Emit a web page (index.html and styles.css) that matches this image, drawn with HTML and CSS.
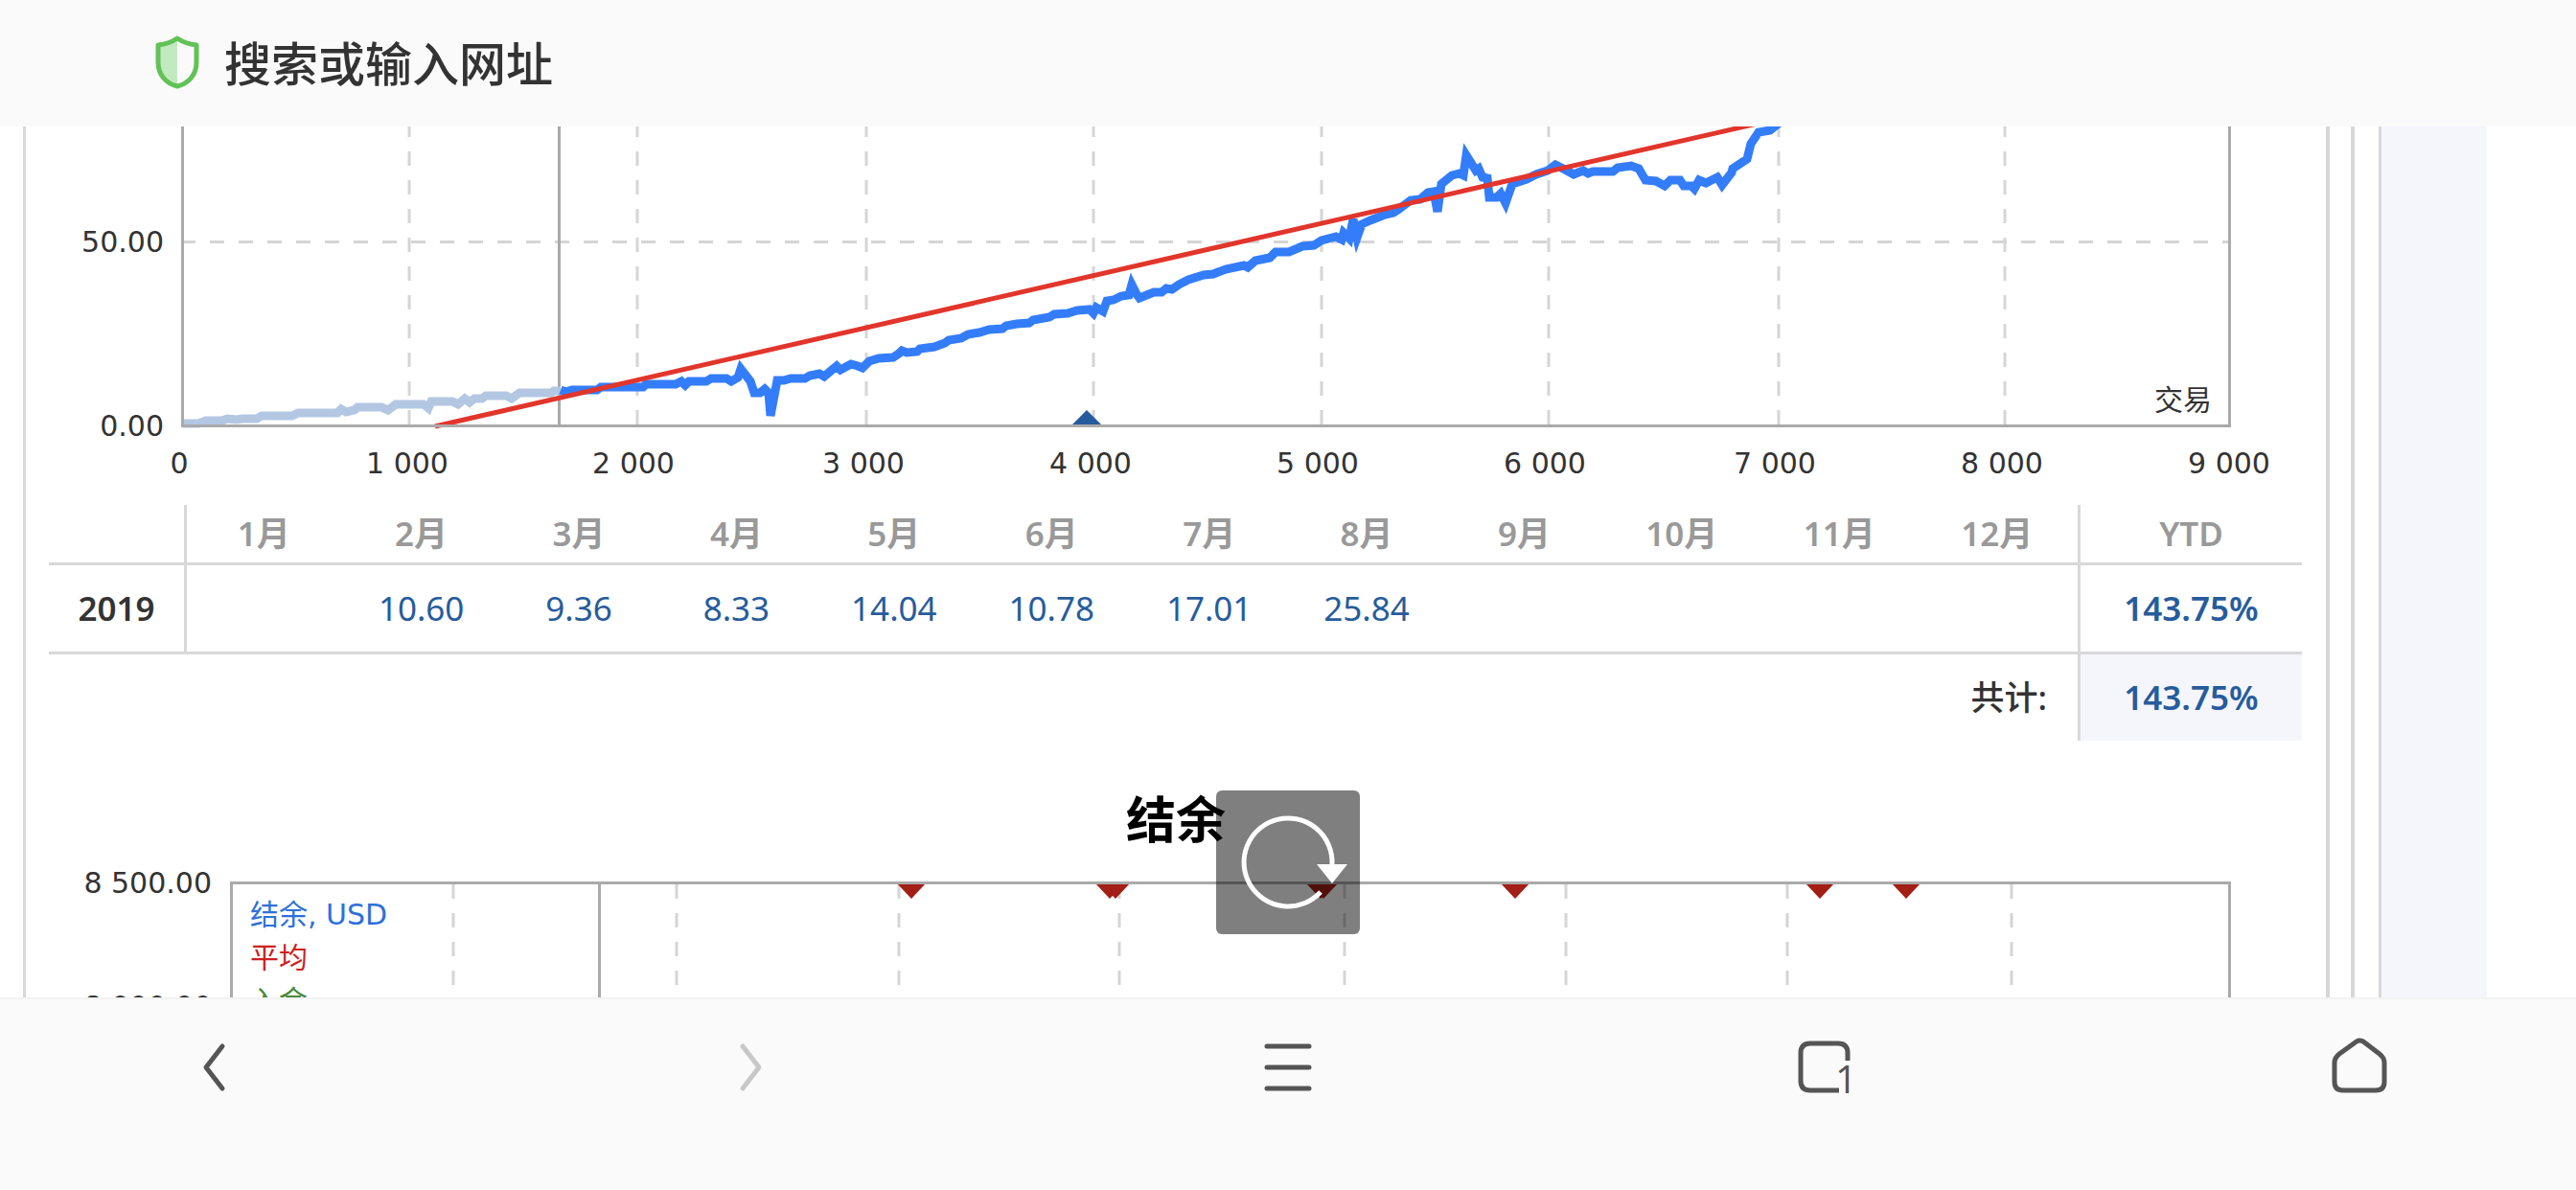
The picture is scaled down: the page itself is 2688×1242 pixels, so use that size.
FILE: index.html
```html
<!DOCTYPE html>
<html lang="zh">
<head>
    <meta charset="UTF-8">
    <title>结余</title>
    <link rel="stylesheet" href="styles.css">
</head>
<body>

<header class="topbar">
    <svg class="shield" width="46" height="56" viewBox="0 0 46 56">
        <path d="M23 5 L5 11 V29 C5 40 13 48 23 52 Z" fill="#c3e9c0"/>
        <path d="M23 3 Q32 9 43 10 V28 C43 41 35 50 23 53 C11 50 3 41 3 28 V10 Q14 9 23 3 Z" fill="none" stroke="#62c258" stroke-width="5" stroke-linejoin="round"/>
    </svg>
    <input class="search" type="text" placeholder="搜索或输入网址" aria-label="搜索或输入网址">
</header>

<main class="page">
    <div class="panel">
        <!-- 增长 -->
        <svg class="chart" viewBox="27 132 2400 395">
            <g class="grid">
                <path d="M427 128V443M665 128V443M904 128V443M1141 128V443M1379 128V443M1616 128V443M1856 128V443M2092 128V443"/>
                <path d="M189 252.500H2326"/>
            </g>
            <path class="axis" d="M583.500 132V443"/>
            <polyline class="line old" points="191,442 207,442 215,439 232,439 237,437 247,438 253,437 268,437 273,434 305,434 311,431 352,431 356,427 361,430 370,428 373,425 398,425 405,428 413,422 442,422 447,426 450,419 472,419 478,422 485,416 490,420 495,416 503,416 507,413 528,413 534,416 542,410 575,410 578,408 585,408"/>
            <polyline class="line" points="585,407 590,409 597,407 623,407 627,404 671,404 674,401 705,401 711,398 715,402 719,398 737,398 742,395 758,395 763,398 770,394 773,385 783,398 787,410 793,410 798,406 802,410 804,434 811,397 818,397 825,395 840,395 845,392 855,390 860,393 867,387 873,382 877,386 888,380 895,382 900,384 907,377 917,374 932,373 938,369 941,366 946,368 957,367 960,364 975,362 986,358 990,355 1003,353 1010,349 1022,347 1032,344 1046,343 1050,340 1061,338 1074,337 1078,334 1095,331 1100,328 1114,327 1124,324 1137,323 1141,327 1144,321 1151,325 1155,314 1162,313 1170,309 1178,308 1181,297 1186,307 1189,311 1204,305 1212,305 1217,301 1223,302 1230,297 1240,292 1256,287 1266,286 1279,281 1298,277 1302,279 1310,272 1325,269 1331,263 1345,263 1359,257 1371,256 1379,251 1394,247 1400,250 1402,243 1408,249 1412,229 1416,248 1421,234 1430,230 1445,224 1454,222 1460,218 1472,209 1482,208 1490,201 1496,200 1500,221 1504,192 1515,183 1523,181 1527,183 1530,162 1540,178 1543,176 1547,185 1552,186 1554,206 1562,206 1566,202 1571,212 1578,192 1593,187 1603,182 1615,178 1623,172 1633,177 1642,182 1652,178 1657,181 1662,179 1683,179 1688,175 1702,173 1710,176 1717,188 1728,189 1737,194 1743,188 1753,188 1757,194 1765,194 1768,197 1773,188 1780,191 1792,185 1797,193 1807,180 1808,176 1823,166 1827,150 1835,138 1847,136 1857,128"/>
            <path class="trend" d="M454 445L1838 128"/>
            <path class="axis" d="M190.500 132V444.500H2326.500V132"/>
            <path class="deposit" d="M1119 443L1134 428L1149 443Z"/>
            <g class="labels end">
                <text x="171" y="263">50.00</text>
                <text x="171" y="455">0.00</text>
                <text x="2308" y="428">交易</text>
            </g>
            <g class="labels mid">
                <text x="187" y="494">0</text>
                <text x="425" y="494">1 000</text>
                <text x="661" y="494">2 000</text>
                <text x="901" y="494">3 000</text>
                <text x="1138" y="494">4 000</text>
                <text x="1375" y="494">5 000</text>
                <text x="1612" y="494">6 000</text>
                <text x="1852" y="494">7 000</text>
                <text x="2089" y="494">8 000</text>
                <text x="2326" y="494">9 000</text>
            </g>
        </svg>

        <table class="months">
            <thead>
                <tr>
                    <th class="year"></th>
                    <th>1月</th><th>2月</th><th>3月</th><th>4月</th><th>5月</th><th>6月</th>
                    <th>7月</th><th>8月</th><th>9月</th><th>10月</th><th>11月</th><th>12月</th>
                    <th class="ytd">YTD</th>
                </tr>
            </thead>
            <tbody>
                <tr>
                    <th class="year">2019</th>
                    <td></td><td>10.60</td><td>9.36</td><td>8.33</td><td>14.04</td><td>10.78</td>
                    <td>17.01</td><td>25.84</td><td></td><td></td><td></td><td></td>
                    <td class="ytd">143.75%</td>
                </tr>
            </tbody>
            <tfoot>
                <tr>
                    <th class="total" colspan="13">共计:</th>
                    <td class="ytd">143.75%</td>
                </tr>
            </tfoot>
        </table>

        <h2 class="title">结余</h2>

        <!-- 结余 -->
        <svg class="chart" viewBox="27 893 2400 260">
            <path class="grid" d="M473 923V1153M706 923V1153M938 923V1153M1168 923V1153M1403 923V1153M1634 923V1153M1865 923V1153M2099 923V1153"/>
            <path class="withdraw" d="M936 922h30l-15 16zM1143 922h30l-15 16zM1149 922h30l-15 16zM1363 922h30l-15 16zM1366 922h30l-15 16zM1566 922h30l-15 16zM1884 922h30l-15 16zM1974 922h30l-15 16z"/>
            <path class="axis" d="M625.500 922V1153M241.500 1153V921.500H2326.500V1153"/>
            <g class="labels end">
                <text x="221" y="932">8 500.00</text>
                <text x="221" y="1061">8 000.00</text>
            </g>
            <g class="labels">
                <text class="blue" x="261" y="965">结余, USD</text>
                <text class="red" x="261" y="1010">平均</text>
                <text class="green" x="261" y="1055">入金</text>
            </g>
        </svg>
    </div>
    <div class="divider"></div>
    <div class="side"></div>
</main>

<button class="reload" aria-label="刷新">
    <svg width="150" height="150" viewBox="0 0 150 150">
        <path d="M109 106 A46 46 0 1 1 121 77" fill="none" stroke="#fff" stroke-width="5"/>
        <path d="M105 77H137L121 97Z" fill="#fff"/>
    </svg>
</button>

<nav class="toolbar">
    <button aria-label="后退">
        <svg width="64" height="64" viewBox="0 0 64 64"><path d="M40 10L23 32L40 54"/></svg>
    </button>
    <button aria-label="前进" disabled>
        <svg width="64" height="64" viewBox="0 0 64 64"><path d="M23 10L40 32L23 54"/></svg>
    </button>
    <button aria-label="菜单">
        <svg width="64" height="64" viewBox="0 0 64 64"><path d="M10 10H54M10 32H54M10 54H54"/></svg>
    </button>
    <button aria-label="窗口">
        <svg width="64" height="64" viewBox="0 0 64 64">
            <path class="flat" d="M56 25V17Q56 7 46 7H17Q7 7 7 17V46Q7 56 17 56H47"/>
            <text x="43" y="59">1</text>
        </svg>
    </button>
    <button aria-label="主页">
        <svg width="64" height="64" viewBox="0 0 64 64"><path d="M27 5Q30 3 34 5L51 18Q56 22 56 27V47Q56 56 47 56H13Q4 56 4 47V27Q4 22 9 18Z"/></svg>
    </button>
</nav>

</body>
</html>
```
FILE: styles.css
```css
*{
    box-sizing: border-box;
}
html,body{
    height: 100%;
}
body{
    margin: 0;
    display: flex;
    flex-direction: column;
    position: relative;
    overflow: hidden;
    background: #fff;
    color: #333;
    font-family: "Noto Sans", "Noto Sans CJK SC", sans-serif;
}
button{
    padding: 0;
    border: 0;
    background: none;
}
svg{
    display: block;
}

/* 顶部地址栏 */
.topbar{
    flex: none;
    height: 132px;
    padding: 0 162px 2px;
    display: flex;
    align-items: center;
    gap: 26px;
    background: #fafafa;
}
.search{
    flex: 1;
    height: 80px;
    padding: 0 0 4px;
    border: 0;
    outline: none;
    background: none;
    font: 500 49px "Noto Sans CJK SC", sans-serif;
    color: #333;
}
.search::placeholder{
    color: #333;
    opacity: 1;
}

/* 页面内容 */
.page{
    flex: 1;
    min-height: 0;
    overflow: hidden;
    display: flex;
    padding: 0 93px 0 24px;
}
.panel{
    flex: 1;
    height: max-content;
    border-left: 3px solid #d8d8d8;
    border-right: 4px solid #d8d8d8;
}
.divider{
    width: 26px;
    border-right: 4px solid #d8d8d8;
}
.side{
    width: 138px;
    padding-left: 25px;
    background: #f5f6fc content-box;
}
.side::before{
    content: "";
    display: block;
    height: 100%;
    border-left: 3px solid #d8d8d8;
}

/* 图表 */
.chart{
    width: 100%;
    height: auto;
}
.grid{
    fill: none;
    stroke: #d5d5d5;
    stroke-width: 3;
    stroke-dasharray: 15 15;
}
.axis{
    fill: none;
    stroke: #aaa;
    stroke-width: 3;
}
.line{
    fill: none;
    stroke: #347dfa;
    stroke-width: 9;
}
.old{
    stroke: #b3c7e3;
}
.trend{
    stroke: #e2352b;
    stroke-width: 5;
}
.deposit{
    fill: #265c9c;
}
.withdraw{
    fill: #a31f15;
}
.labels{
    font: 30px "DejaVu Sans", "Noto Sans CJK SC", sans-serif;
    fill: #333;
}
.end{
    text-anchor: end;
}
.mid{
    text-anchor: middle;
}
.blue{
    fill: #2f6fdc;
}
.red{
    fill: #cc2020;
}
.green{
    fill: #4a8a3c;
}

/* 月度表格 */
.months{
    width: calc(100% - 49px);
    margin-left: 24px;
    table-layout: fixed;
    border-spacing: 0;
    font-size: 35px;
    line-height: 48px;
    text-align: center;
}
.months th,
.months td{
    padding: 0 4px 0 0;
    border-bottom: 3px solid #d8d8d8;
}
.months th{
    font-weight: 600;
}
.months thead th{
    height: 63px;
    color: #999;
}
.months td{
    height: 93px;
    color: #265c9c;
}
.months .year{
    width: 144px;
    padding: 0;
    border-right: 3px solid #d8d8d8;
}
.months .ytd{
    width: 234px;
    padding: 0;
    border-left: 3px solid #d8d8d8;
    font-weight: 600;
}
.months tfoot th,
.months tfoot td{
    height: 90px;
    border-bottom: 0;
}
.months tfoot .ytd{
    background: #f5f6fc;
}
.months .total{
    padding-right: 32px;
    text-align: right;
    font-weight: 500;
}

.title{
    margin: 44px 0 0;
    font-size: 52px;
    line-height: 76px;
    text-align: center;
    color: #000;
}

/* 悬浮刷新按钮 */
.reload{
    position: absolute;
    top: 825px;
    left: calc(50% - 75px);
    border-radius: 6px;
    background: rgba(0, 0, 0, 0.5);
}

/* 底部工具栏 */
.toolbar{
    flex: none;
    height: 201px;
    padding: 39px 168px 0;
    display: flex;
    justify-content: space-between;
    align-items: flex-start;
    background: #fafafa;
    border-top: 2px solid #f2f2f2;
}
.toolbar button{
    width: 112px;
    display: flex;
    justify-content: center;
}
.toolbar svg{
    overflow: visible;
    fill: none;
    stroke: #555;
    stroke-width: 5;
    stroke-linecap: round;
    stroke-linejoin: round;
}
.toolbar button:disabled svg{
    stroke: #c8c8c8;
}
.toolbar .flat{
    stroke-linecap: butt;
}
.toolbar text{
    font: 40px "Open Sans", sans-serif;
    fill: #555;
    stroke: none;
}
```
